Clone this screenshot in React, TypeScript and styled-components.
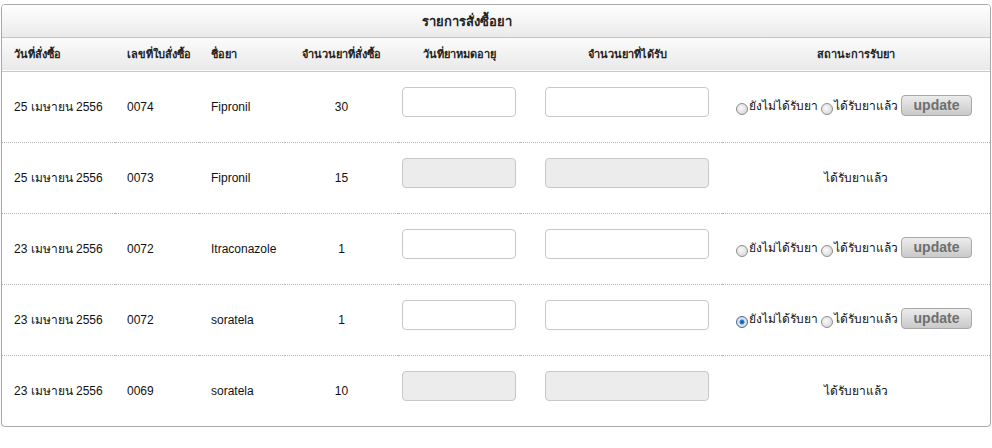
import React from 'react';
import styled, { createGlobalStyle } from 'styled-components';

const GlobalStyle = createGlobalStyle`
  body {
    margin: 0;
    background: #fff;
    font-family: Tahoma, "Liberation Sans", sans-serif;
  }
`;

const Panel = styled.div`
  width: 990px;
  margin: 4px 0 0 1px;
  box-sizing: border-box;
  border: 1px solid #a9a9a9;
  border-radius: 4px;
  overflow: hidden;
  box-shadow: 0 1px 1px rgba(0, 0, 0, 0.12);
`;

const TitleBar = styled.div`
  height: 32px;
  display: flex;
  align-items: center;
  justify-content: center;
  padding-right: 58px;
  background: linear-gradient(#ffffff, #eaeaea);
  border-bottom: 1px solid #c4c4c4;
  font-size: 13px;
  font-weight: bold;
  color: #222;
`;

const Table = styled.table`
  width: 100%;
  border-collapse: collapse;
  table-layout: fixed;
  font-size: 12px;
  color: #111;
`;

const HeadRow = styled.tr`
  height: 33px;
  background: linear-gradient(#fbfbfb, #e9e9e9);
  border-bottom: 1px solid #c8c8c8;
`;

const Th = styled.th<{ $align?: string; $pad?: number }>`
  font-size: 11px;
  font-weight: bold;
  text-align: ${(p) => p.$align || 'center'};
  padding: 0 0 0 ${(p) => p.$pad ?? 0}px;
  color: #222;
`;

const Row = styled.tr`
  height: 71px;
  & + & {
    border-top: 1px dotted #b5b5b5;
  }
`;

const Td = styled.td<{ $align?: string; $pad?: number }>`
  text-align: ${(p) => p.$align || 'center'};
  padding: 0 0 0 ${(p) => p.$pad ?? 0}px;
  vertical-align: middle;
  white-space: nowrap;
`;

const Field = styled.input`
  box-sizing: border-box;
  width: ${(p) => p.width}px;
  height: 30px;
  border: 1px solid #c8c8c8;
  border-radius: 4px;
  background: ${(p) => (p.disabled ? '#ececec' : '#fff')};
  margin: 0 0 9px;
  padding: 0 6px;
  vertical-align: middle;
`;

const StatusGroup = styled.div`
  display: inline-flex;
  align-items: center;
  margin-left: -4px;
`;

const RadioLabel = styled.label`
  display: inline-flex;
  align-items: center;
  font-size: 12px;
  margin-right: 3px;
`;

const RadioDot = styled.span<{ $checked?: boolean }>`
  width: 12px;
  height: 12px;
  border-radius: 50%;
  box-sizing: border-box;
  border: 1px solid ${(p) => (p.$checked ? '#4a6d92' : '#8e8e8e')};
  background: ${(p) =>
    p.$checked
      ? 'radial-gradient(circle, #0d4e96 0, #2a7fd0 2px, #dfe9f3 3px, #c9d3dd 6px)'
      : 'radial-gradient(circle at 40% 40%, #fafafa, #cfcfcf)'};
  margin: 7px 1px 0 0;
`;

const UpdateButton = styled.button`
  width: 71px;
  height: 21px;
  border: 1px solid #a8a8a8;
  border-radius: 4px;
  background: linear-gradient(#ececec, #c9c9c9);
  color: #6f6f6f;
  font-family: Tahoma, "Liberation Sans", sans-serif;
  font-weight: bold;
  font-size: 14px;
  padding: 0 0 2px;
  margin: 0;
`;

interface IOrder {
  date: string;
  no: string;
  name: string;
  qty: string;
  received: boolean;
  checked?: 'no' | 'yes';
}

const orders: IOrder[] = [
  { date: '25 เมษายน 2556', no: '0074', name: 'Fipronil', qty: '30', received: false },
  { date: '25 เมษายน 2556', no: '0073', name: 'Fipronil', qty: '15', received: true },
  { date: '23 เมษายน 2556', no: '0072', name: 'Itraconazole', qty: '1', received: false },
  { date: '23 เมษายน 2556', no: '0072', name: 'soratela', qty: '1', received: false, checked: 'no' },
  { date: '23 เมษายน 2556', no: '0069', name: 'soratela', qty: '10', received: true },
];

export default function App() {
  return (
    <>
      <GlobalStyle />
      <Panel>
        <TitleBar>รายการสั่งซื้อยา</TitleBar>
        <Table>
          <colgroup>
            <col style={{ width: 113 }} />
            <col style={{ width: 84 }} />
            <col style={{ width: 86 }} />
            <col style={{ width: 113 }} />
            <col style={{ width: 122 }} />
            <col style={{ width: 202 }} />
            <col />
          </colgroup>
          <thead>
            <HeadRow>
              <Th $align="left" $pad={12}>วันที่สั่งซื้อ</Th>
              <Th $align="left" $pad={12}>เลขที่ใบสั่งซื้อ</Th>
              <Th $align="left" $pad={12}>ชื่อยา</Th>
              <Th>จำนวนยาที่สั่งซื้อ</Th>
              <Th>วันที่ยาหมดอายุ</Th>
              <Th $pad={12}>จำนวนยาที่ได้รับ</Th>
              <Th>สถานะการรับยา</Th>
            </HeadRow>
          </thead>
          <tbody>
            {orders.map((o, i) => (
              <Row key={i}>
                <Td $align="left" $pad={12}>{o.date}</Td>
                <Td $align="left" $pad={12}>{o.no}</Td>
                <Td $align="left" $pad={12}>{o.name}</Td>
                <Td>{o.qty}</Td>
                <Td>
                  <Field width={114} disabled={o.received} />
                </Td>
                <Td $pad={12}>
                  <Field width={164} disabled={o.received} />
                </Td>
                <Td>
                  {o.received ? (
                    'ได้รับยาแล้ว'
                  ) : (
                    <StatusGroup>
                      <RadioLabel>
                        <RadioDot $checked={o.checked === 'no'} />
                        ยังไม่ได้รับยา
                      </RadioLabel>
                      <RadioLabel>
                        <RadioDot $checked={o.checked === 'yes'} />
                        ได้รับยาแล้ว
                      </RadioLabel>
                      <UpdateButton>update</UpdateButton>
                    </StatusGroup>
                  )}
                </Td>
              </Row>
            ))}
          </tbody>
        </Table>
      </Panel>
    </>
  );
}
